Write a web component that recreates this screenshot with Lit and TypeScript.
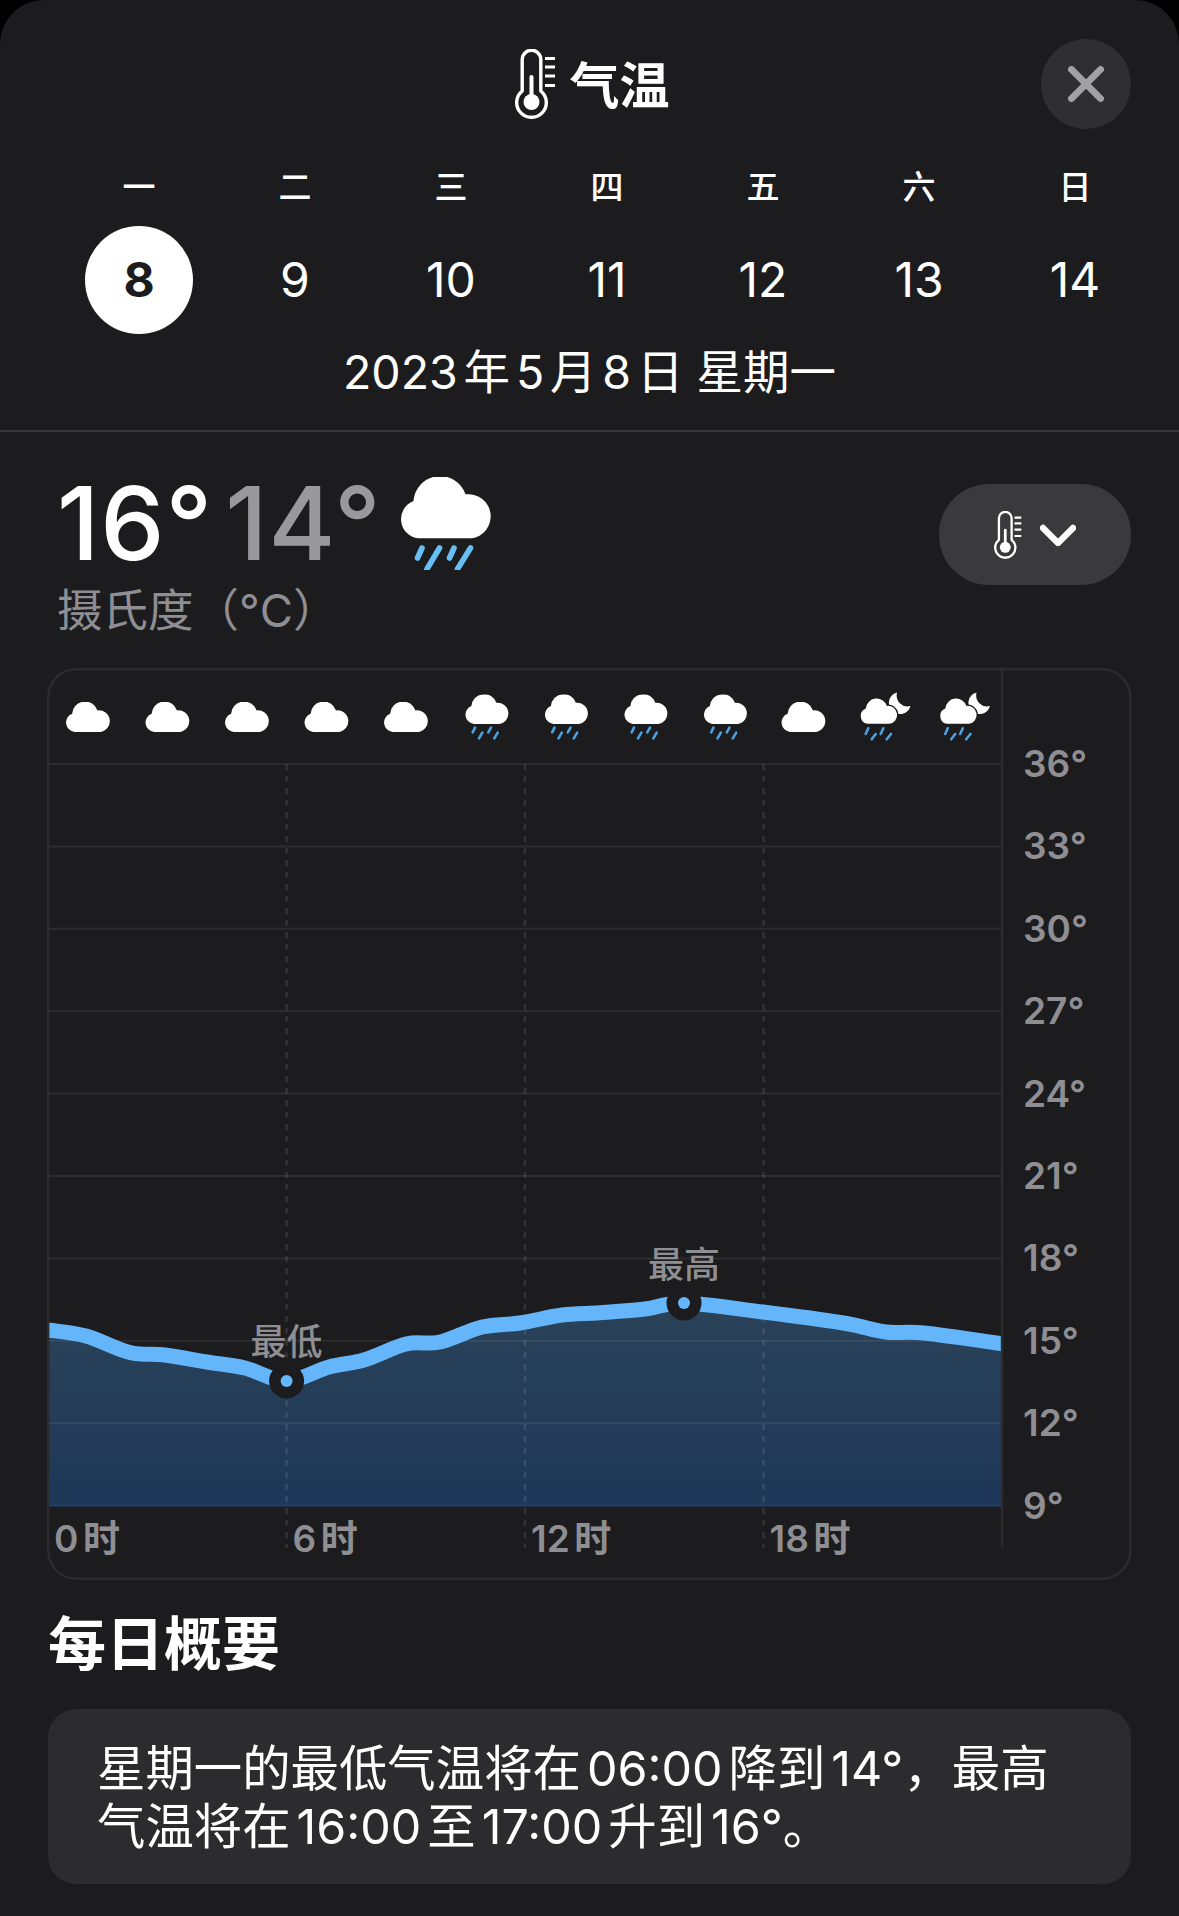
import { LitElement, html, css, svg } from 'lit';
import { customElement } from 'lit/decorators.js';

const WEEK = ['一', '二', '三', '四', '五', '六', '日'];
const DAYS = [8, 9, 10, 11, 12, 13, 14];

// chart geometry, page px; the bordered box starts at 47,668
const OX = 47;
const OY = 668;
const GRID_TOP = 764;
const GRID_STEP = 82.4;
const GRID_LABELS = [36, 33, 30, 27, 24, 21, 18, 15, 12, 9];
const PLOT_LEFT = 48;
const PLOT_RIGHT = 1002;
const PLOT_BOTTOM = 1505;

const CURVE: [number, number][] = [
  [48, 1330], [86, 1336], [130, 1352.5], [165, 1355], [207, 1362], [245, 1368],
  [286.6, 1381], [329, 1367], [364, 1360], [406, 1344], [440, 1342], [482, 1327],
  [520, 1323], [562, 1315], [600, 1312.7], [645, 1309], [684, 1303], [763, 1312],
  [843.5, 1323], [885.6, 1332], [924, 1333], [1002, 1343.7],
];

// plain = cloud, rain = cloud + drops, night = cloud + drops + moon
const HOURS = ['plain', 'plain', 'plain', 'plain', 'plain', 'rain', 'rain', 'rain', 'rain', 'plain', 'night', 'night'];

function smooth(pts: [number, number][]) {
  let d = `M${pts[0][0]} ${pts[0][1]}`;
  for (let i = 0; i < pts.length - 1; i++) {
    const p0 = pts[i - 1] ?? pts[i];
    const p1 = pts[i];
    const p2 = pts[i + 1];
    const p3 = pts[i + 2] ?? p2;
    const c1x = p1[0] + (p2[0] - p0[0]) / 6;
    const c1y = p1[1] + (p2[1] - p0[1]) / 6;
    const c2x = p2[0] - (p3[0] - p1[0]) / 6;
    const c2y = p2[1] - (p3[1] - p1[1]) / 6;
    d += `C${c1x.toFixed(1)} ${c1y.toFixed(1)} ${c2x.toFixed(1)} ${c2y.toFixed(1)} ${p2[0]} ${p2[1]}`;
  }
  return d;
}

const CLOUD = 'M27 85A27 27 0 0 1 20 33A37 37 0 0 1 92 24A30.5 30.5 0 1 1 100 85Z';

const thermometer = (cls: string) => html`
  <svg class=${cls} viewBox="0 0 41 70" fill="none" stroke="#fff">
    <path stroke-width="3.4" d="M7.2 42V10.5a9.3 9.3 0 0 1 18.6 0V42A14.8 14.8 0 1 1 7.2 42Z" />
    <circle cx="16.5" cy="53" r="8" fill="#fff" stroke="none" />
    <rect x="14.5" y="26" width="4" height="27" rx="2" fill="#fff" stroke="none" />
    <path stroke-width="3.2" d="M30 9.5h10M30 18h10M30 27h10M30 36.5h10" />
  </svg>
`;

function hourIcon(kind: string, cx: number) {
  if (kind === 'plain') {
    return svg`<svg x=${cx - 23} y="34" width="46" height="30" viewBox="0 0 130 85"><path d=${CLOUD} fill="#fff" /></svg>`;
  }
  if (kind === 'rain') {
    return svg`<g transform="translate(${cx} 0)">
      <svg x="-21" y="26.5" width="45" height="29.5" viewBox="0 0 130 85"><path d=${CLOUD} fill="#fff" /></svg>
      <path stroke="#4aa3e0" stroke-width="2.6" stroke-linecap="round" fill="none"
        d="M-10.5 59.7l-2.3 4.6M-3.2 64.7l-3.3 5.6M5.5 59.7l-2.7 4.6M12.2 64.7l-3.4 5.6" />
    </g>`;
  }
  return svg`<g transform="translate(${cx} 0)">
    <path fill="#fff" d="M14 24.5A11 11 0 1 0 27.5 38A11 11 0 0 1 14 24.5Z" />
    <svg x="-24.3" y="29.7" width="40.6" height="27.6" viewBox="-4 -4 138 94" overflow="visible">
      <path d=${CLOUD} fill="#fff" stroke="#1c1c1e" stroke-width="9" paint-order="stroke" />
    </svg>
    <path stroke="#4aa3e0" stroke-width="2.6" stroke-linecap="round" fill="none"
      d="M-14.7 60.3l-2.6 5.7M-7.3 66l-4 5.3M.3 60.3l-2.6 5.7M8 66l-4.3 5.3" />
  </g>`;
}

@customElement('app-root')
export class AppRoot extends LitElement {
  static styles = css`
    :host {
      display: block;
      width: 1179px;
      height: 1916px;
      background: #000;
      overflow: hidden;
      font-family: Inter, 'Noto Sans CJK SC', sans-serif;
      color: #fff;
      text-autospace: normal;
    }

    .sheet {
      height: 1916px;
      background: #1c1c1e;
      border-radius: 44px 44px 0 0;
    }

    /* --- Top bar --- */
    .top {
      border-bottom: 2px solid #38383a;
      height: 432px;
      box-sizing: border-box;
      padding-top: 39px;
    }
    .title-row {
      display: grid;
      grid-template-columns: 1fr auto 1fr;
      align-items: center;
      padding: 0 48px;
      height: 90px;
    }
    .title {
      grid-column: 2;
      display: flex;
      align-items: center;
      gap: 14px;
      font-size: 50px;
      font-weight: 600;
      line-height: 60px;
      padding-left: 5px;
    }
    .title span {
      padding-top: 4px;
    }
    .title-icon {
      width: 41px;
      height: 70px;
    }
    .close {
      grid-column: 3;
      justify-self: end;
      width: 90px;
      height: 90px;
      border-radius: 50%;
      background: #2f2f32;
      display: flex;
      align-items: center;
      justify-content: center;
    }
    .close svg {
      width: 36px;
      height: 36px;
    }

    .week {
      display: grid;
      grid-template-columns: repeat(7, 156px);
      padding-left: 61px;
      margin-top: 36px;
      justify-items: center;
      font-size: 33px;
      font-weight: 500;
      line-height: 44px;
    }
    .days {
      display: grid;
      grid-template-columns: repeat(7, 156px);
      padding-left: 61px;
      margin-top: 17px;
      justify-items: center;
      align-items: center;
      font-size: 48px;
      height: 108px;
    }
    .day {
      width: 108px;
      height: 108px;
      display: flex;
      align-items: center;
      justify-content: center;
      border-radius: 50%;
      padding-bottom: 2px;
      box-sizing: border-box;
    }
    .day.sel {
      background: #fff;
      color: #1c1c1e;
      font-weight: 700;
    }
    .date {
      text-align: center;
      font-size: 46.5px;
      line-height: 60px;
      margin-top: 8px;
    }

    /* --- Current temperature --- */
    .now {
      display: flex;
      justify-content: space-between;
      align-items: flex-start;
      padding: 0 48px 0 57px;
      height: 236px;
    }
    .temps {
      display: flex;
      align-items: flex-start;
      margin-top: 31px;
      font-size: 102px;
      font-weight: 500;
      letter-spacing: 1px;
      line-height: 120px;
      height: 120px;
    }
    .low {
      color: #98989d;
      margin-left: 12px;
    }
    .big-icon {
      width: 94px;
      height: 93px;
      margin: 14px 0 0 17px;
    }
    .unit {
      font-size: 45.5px;
      line-height: 56px;
      color: #8e8e93;
    }
    .picker {
      margin-top: 52px;
      width: 192px;
      height: 101px;
      border-radius: 50px;
      background: #3a3a3c;
      display: flex;
      align-items: center;
      gap: 18px;
      padding-left: 55px;
      box-sizing: border-box;
    }
    .picker-icon {
      width: 28px;
      height: 48px;
      flex: none;
    }
    .picker svg.chev {
      width: 36px;
      height: 22px;
      flex: none;
    }

    /* --- Chart --- */
    .chart {
      margin: 0 0 0 47px;
      width: 1085px;
      height: 912px;
      position: relative;
    }
    .chart svg.plot {
      display: block;
      width: 1085px;
      height: 912px;
    }
    .axis {
      font-family: Inter, 'Noto Sans CJK SC', sans-serif;
      font-size: 37px;
      font-weight: 600;
      fill: #8e8e93;
    }
    .mark {
      font-family: Inter, 'Noto Sans CJK SC', sans-serif;
      font-size: 36px;
      font-weight: 500;
      fill: #8e8e93;
      text-anchor: middle;
    }

    /* --- Summary --- */
    .summary-title {
      font-size: 58px;
      font-weight: 700;
      line-height: 70px;
      padding-left: 48px;
      margin-top: 29px;
    }
    .summary {
      margin: 30px 48px 0;
      height: 175px;
      box-sizing: border-box;
      background: #2c2c2e;
      border-radius: 28px;
      padding: 31px 60px 0 49px;
      font-size: 48.4px;
      line-height: 58px;
    }
  `;

  private renderChart() {
    const curve = CURVE.map(([x, y]) => [x - OX, y - OY] as [number, number]);
    const line = smooth(curve);
    const left = PLOT_LEFT - OX;
    const right = PLOT_RIGHT - OX;
    const bottom = PLOT_BOTTOM - OY;
    const area = `${line}V${bottom}H${left}Z`;
    const hourX = (h: number) => left + (h * (right - left)) / 24;
    const ys = GRID_LABELS.map((_, i) => GRID_TOP - OY + i * GRID_STEP);
    const low = curve[6];
    const high = curve[16];
    return html`
      <svg class="plot" viewBox="0 0 1085 912">
        <defs>
          <linearGradient id="fill" x1="0" y1="0" x2="0" y2="1">
            <stop offset="0" stop-color="#2a4358" />
            <stop offset="1" stop-color="#1f3758" />
          </linearGradient>
        </defs>
        <path d=${area} fill="url(#fill)" />
        ${ys.map(
          (y, i) => svg`<line x1=${left} x2=${right} y1=${y} y2=${y} stroke=${i === 9 ? '#24416a' : 'rgba(255,255,255,0.07)'} stroke-width="2" />`,
        )}
        ${[6, 12, 18].map(
          (h) => svg`<line x1=${hourX(h)} x2=${hourX(h)} y1=${GRID_TOP - OY} y2="880" stroke="rgba(255,255,255,0.1)" stroke-width="2.4" stroke-dasharray="6 6" />`,
        )}
        <path d=${line} fill="none" stroke="#64b5f9" stroke-width="15" />
        <line x1=${right} x2=${right} y1="0" y2="879" stroke="#2c2c2e" stroke-width="2.4" />
        <rect x="1.2" y="1.2" width="1082" height="909.5" rx="28" fill="none" stroke="#2c2c2e" stroke-width="2.4" />
        ${[low, high].map(
          ([x, y]) => svg`
            <circle cx=${x} cy=${y} r="17.5" fill="#1c1c1e" />
            <circle cx=${x} cy=${y} r="6" fill="#64b5f9" />
          `,
        )}
        <text class="mark" x=${low[0]} y=${1342 - OY + 13}>最低</text>
        <text class="mark" x=${high[0]} y=${1265 - OY + 13}>最高</text>
        ${HOURS.map((k, i) => hourIcon(k, 41 + i * 79.5))}
        ${GRID_LABELS.map(
          (t, i) => svg`<text class="axis" x="976" y=${ys[i] + 13}>${t}°</text>`,
        )}
        ${[0, 6, 12, 18].map(
          (h) => svg`<text class="axis" x=${hourX(h) + 6} y="884">${h}时</text>`,
        )}
      </svg>
    `;
  }

  render() {
    return html`
      <div class="sheet">
        <div class="top">
          <div class="title-row">
            <div class="title">${thermometer('title-icon')}<span>气温</span></div>
            <div class="close">
              <svg viewBox="0 0 36 36" fill="none" stroke="#a1a1a6" stroke-width="6.8" stroke-linecap="round">
                <path d="M3.4 3.4l29.2 29.2M32.6 3.4L3.4 32.6" />
              </svg>
            </div>
          </div>
          <div class="week">${WEEK.map((w) => html`<div>${w}</div>`)}</div>
          <div class="days">
            ${DAYS.map((d) => html`<div class="day ${d === 8 ? 'sel' : ''}">${d}</div>`)}
          </div>
          <div class="date">2023年5月8日 星期一</div>
        </div>

        <div class="now">
          <div>
            <div class="temps">
              <span>16°</span><span class="low">14°</span>
              <svg class="big-icon" viewBox="0 0 94 93">
                <svg x="0" y="0" width="94" height="61.5" viewBox="0 0 130 85"><path d=${CLOUD} fill="#fff" /></svg>
                <path stroke="#66c0f4" stroke-width="5.6" stroke-linecap="round" fill="none"
                  d="M23 71l-4.5 10M40.5 71l-12.5 21M55 71l-4.5 10M71.5 71l-13 21" />
              </svg>
            </div>
            <div class="unit">摄氏度（°C）</div>
          </div>
          <div class="picker">
            ${thermometer('picker-icon')}
            <svg class="chev" viewBox="0 0 36 22" fill="none" stroke="#fff" stroke-width="6.4" stroke-linecap="round" stroke-linejoin="round">
              <path d="M3 4l15 15L33 4" />
            </svg>
          </div>
        </div>

        <div class="chart">${this.renderChart()}</div>

        <div class="summary-title">每日概要</div>
        <div class="summary">星期一的最低气温将在06:00降到14°，最高气温将在16:00至17:00升到16°。</div>
      </div>
    `;
  }
}
